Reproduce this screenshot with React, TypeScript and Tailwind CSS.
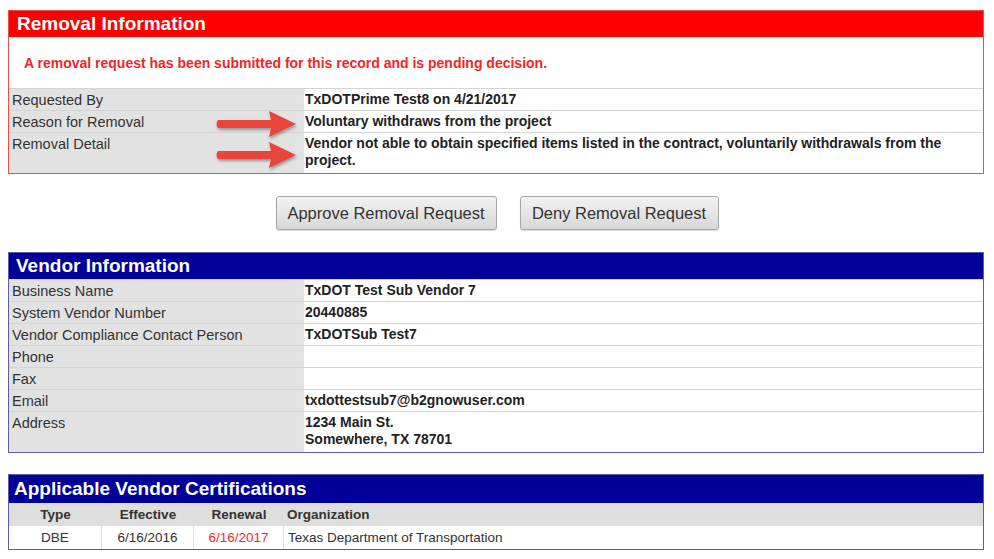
import React from 'react'

const font = { fontFamily: '"Liberation Sans", Arial, sans-serif' }

function Arrow({ top, left }: { top: number; left: number }) {
  return (
    <svg
      className="absolute pointer-events-none"
      style={{ top, left }}
      width="90"
      height="36"
      viewBox="0 0 90 36"
    >
      <defs>
        <filter id="sh" x="-20%" y="-30%" width="140%" height="160%">
          <feDropShadow dx="1" dy="2" stdDeviation="1.5" floodColor="#000" floodOpacity="0.35" />
        </filter>
      </defs>
      <path
        d="M4 13 L57 13 L55 4 L82 17 L55 30 L57 21 L4 21 Q1 17 4 13 Z"
        fill="#e8443d"
        filter="url(#sh)"
      />
    </svg>
  )
}

function Row({
  label,
  children,
  tall,
}: {
  label: string
  children?: React.ReactNode
  tall?: boolean
}) {
  return (
    <div className={`flex border-t border-[#d4d4d4] ${tall ? 'min-h-[41px]' : 'min-h-[22px]'}`}>
      <div className="w-[294px] shrink-0 bg-[#e2e2e2] px-[3px] pt-[2px] text-[14.5px] leading-[18px] text-[#333]">
        {label}
      </div>
      <div className="flex-1 border-l border-[#e4e4e4] bg-white pl-[1px] pr-[4px] pt-[2px] text-[14px] font-bold leading-[17px] text-[#222]">
        {children}
      </div>
    </div>
  )
}

export default function App() {
  return (
    <div className="relative min-h-[559px] w-[994px] bg-white px-[8px] pt-[10px]" style={font}>
      {/* Removal Information */}
      <div className="w-[976px] border border-[#e8504c]">
        <div className="h-[26px] bg-[#ff0000] px-[8px] text-[19px] font-bold leading-[26px] text-white">
          Removal Information
        </div>
        <div className="h-[51px] px-[15px] pt-[16px] text-[14px] font-bold text-[#ee2727]">
          A removal request has been submitted for this record and is pending decision.
        </div>
        <Row label="Requested By">TxDOTPrime Test8 on 4/21/2017</Row>
        <Row label="Reason for Removal">Voluntary withdraws from the project</Row>
        <Row label="Removal Detail" tall>
          Vendor not able to obtain specified items listed in the contract, voluntarily withdrawals from the project.
        </Row>
      </div>

      {/* Actions */}
      <div className="flex justify-center gap-[23px] pt-[22px]">
        <button className="h-[34px] w-[221px] rounded-[3px] border border-[#a8a8a8] bg-gradient-to-b from-[#f2f2f2] to-[#d8d8d8] text-[16.5px] text-[#333] shadow-[0_1px_1px_rgba(0,0,0,0.15)]">
          Approve Removal Request
        </button>
        <button className="h-[34px] w-[199px] rounded-[3px] border border-[#a8a8a8] bg-gradient-to-b from-[#f2f2f2] to-[#d8d8d8] text-[16.5px] text-[#333] shadow-[0_1px_1px_rgba(0,0,0,0.15)]">
          Deny Removal Request
        </button>
      </div>

      {/* Vendor Information */}
      <div className="mt-[22px] w-[976px] border border-[#5c5ca8]">
        <div className="h-[26px] bg-[#000099] px-[7px] text-[19px] font-bold leading-[26px] text-white">
          Vendor Information
        </div>
        <Row label="Business Name">TxDOT Test Sub Vendor 7</Row>
        <Row label="System Vendor Number">20440885</Row>
        <Row label="Vendor Compliance Contact Person">TxDOTSub Test7</Row>
        <Row label="Phone" />
        <Row label="Fax" />
        <Row label="Email">txdottestsub7@b2gnowuser.com</Row>
        <Row label="Address" tall>
          1234 Main St.
          <br />
          Somewhere, TX 78701
        </Row>
      </div>

      {/* Applicable Vendor Certifications */}
      <div className="mt-[21px] w-[976px] border border-[#5c5ca8]">
        <div className="h-[28px] bg-[#000099] px-[5px] text-[19px] font-bold leading-[28px] text-white">
          Applicable Vendor Certifications
        </div>
        <div className="grid h-[23px] grid-cols-[93px_92px_90px_1fr] bg-[#dedede] text-[13.5px] font-bold leading-[23px] text-[#333]">
          <div className="text-center">Type</div>
          <div className="text-center">Effective</div>
          <div className="text-center">Renewal</div>
          <div className="px-[3px]">Organization</div>
        </div>
        <div className="grid h-[23px] grid-cols-[93px_92px_90px_1fr] bg-white text-[13.5px] leading-[23px] text-[#333]">
          <div className="border-r border-[#e0e0e0] text-center">DBE</div>
          <div className="border-r border-[#e0e0e0] text-center">6/16/2016</div>
          <div className="border-r border-[#e0e0e0] text-center text-[#ee2b2b]">6/16/2017</div>
          <div className="px-[4px]">Texas Department of Transportation</div>
        </div>
      </div>

      <Arrow top={107} left={214} />
      <Arrow top={138} left={214} />
    </div>
  )
}
